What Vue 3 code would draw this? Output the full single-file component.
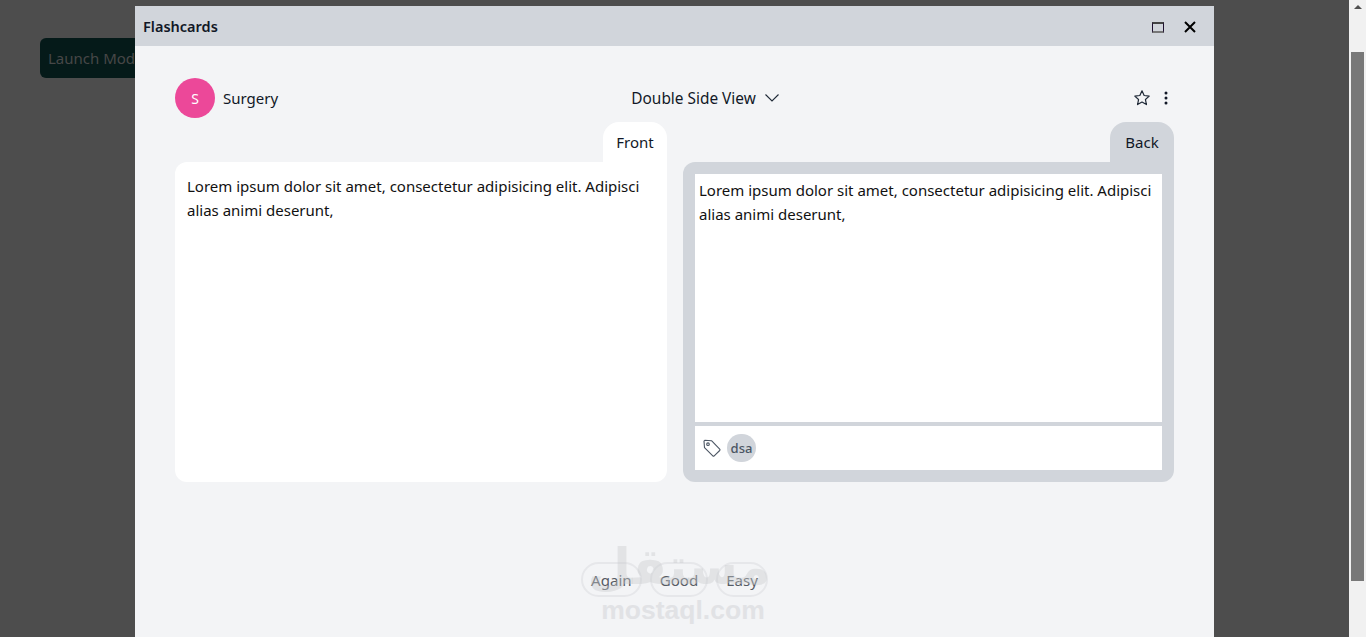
<script setup>
const grades = ['Again', 'Good', 'Easy']
const lorem = 'Lorem ipsum dolor sit amet, consectetur adipisicing elit. Adipisci alias animi deserunt,'
</script>

<template>
  <div class="page">
    <div class="viewport">
      <button class="launch">Launch Modal</button>
      <div class="overlay">
        <section class="modal">
          <header class="modal-head">
            <h1 class="modal-title">Flashcards</h1>
            <div class="win-actions">
              <span class="maximize"></span>
              <svg class="close" width="16" height="16" viewBox="0 0 16 16" fill="none" stroke="#000" stroke-width="2">
                <path d="M3 3l10 10M13 3L3 13" />
              </svg>
            </div>
          </header>
          <div class="modal-body">
            <div class="toolbar">
              <div class="deck">
                <span class="avatar">S</span>
                <span>Surgery</span>
              </div>
              <div class="view">
                <span>Double Side View</span>
                <svg width="16" height="16" viewBox="0 0 16 16" fill="none" stroke="#1f2937" stroke-width="1.100">
                  <path d="M1.500 4.500L8 11l6.500-6.500" />
                </svg>
              </div>
              <div class="tools">
                <svg width="18" height="18" viewBox="0 0 18 18" fill="none" stroke="#1f2937" stroke-width="1.200" stroke-linejoin="round">
                  <path d="M9 1.800l2.150 4.700 5.050.6-3.750 3.450 1 5.050L9 13.100l-4.450 2.500 1-5.050L1.800 7.100l5.050-.6z" />
                </svg>
                <svg width="16" height="16" viewBox="0 0 16 16" fill="#111827">
                  <circle cx="8" cy="3" r="1.500" />
                  <circle cx="8" cy="8" r="1.500" />
                  <circle cx="8" cy="13" r="1.500" />
                </svg>
              </div>
            </div>
            <div class="cards">
              <div class="side">
                <div class="tab front-tab">Front</div>
                <div class="card front-card">
                  <p class="card-text">{{ lorem }}</p>
                </div>
              </div>
              <div class="side">
                <div class="tab back-tab">Back</div>
                <div class="card back-card">
                  <p class="card-text back-text">{{ lorem }}</p>
                  <div class="tags">
                    <svg width="20" height="20" viewBox="0 0 20 20" fill="none" stroke="#4b5563" stroke-width="1.100" stroke-linejoin="round">
                      <path d="M2 3.200L2.800 2.300l6.700.4 8.200 8.400a1 1 0 0 1 0 1.400l-5.500 5.300a1 1 0 0 1-1.400 0L2.500 9.700z" />
                      <circle cx="6" cy="6.200" r="1.300" />
                    </svg>
                    <span class="tag">dsa</span>
                  </div>
                </div>
              </div>
            </div>
            <div class="grades">
              <button v-for="g in grades" :key="g" class="grade">{{ g }}</button>
            </div>
          </div>
        </section>
      </div>
      <div class="watermark" aria-hidden="true">
        <div class="wm-ar">مستقل</div>
        <div class="wm-en">mostaql.com</div>
      </div>
    </div>
    <div class="scrollbar">
      <span class="arrow"></span>
      <span class="thumb"></span>
    </div>
  </div>
</template>

<style>
html, body { margin: 0; overflow: hidden; }
</style>

<style scoped>
.page {
  display: flex;
  height: 637px;
  overflow: hidden;
  font-family: "Noto Sans", "Open Sans", sans-serif;
  font-size: 16px;
  color: #111827;
}
.viewport {
  position: relative;
  flex: 1;
  background: #4d4d4d;
  padding: 38px 40px;
}
.launch {
  display: block;
  height: 40px;
  width: 140px;
  padding: 0 8px;
  text-align: left;
  border: 0;
  border-radius: 6px;
  background: #051a19;
  color: #474747;
  font: inherit;
  font-size: 15px;
  white-space: nowrap;
}
.overlay {
  position: absolute;
  inset: 0;
  display: flex;
  justify-content: center;
  padding-top: 6px;
}
.modal {
  width: 1079px;
  height: 700px;
  background: #f3f4f6;
}
.modal-head {
  display: flex;
  align-items: center;
  justify-content: space-between;
  height: 40px;
  padding: 0 16px 0 8px;
  background: #d1d5db;
}
.modal-title {
  margin: 0;
  font-size: 14.500px;
  font-weight: 600;
}
.win-actions {
  display: flex;
  align-items: center;
  gap: 18px;
}
.maximize {
  box-sizing: border-box;
  width: 12px;
  height: 11px;
  border: 1px solid #1f1030;
  border-top: 2px solid #444;
  border-bottom: 2px solid #777;
  margin-top: 2px;
}
.close { margin-top: 2px; }
.modal-body { padding: 32px 40px; }
.toolbar {
  display: flex;
  align-items: center;
  justify-content: space-between;
  height: 40px;
  margin-bottom: 4px;
}
.deck {
  display: flex;
  align-items: center;
  gap: 8px;
  font-size: 15px;
}
.avatar {
  display: flex;
  align-items: center;
  justify-content: center;
  width: 40px;
  height: 40px;
  border-radius: 50%;
  background: #ec4899;
  color: #fff;
  font-size: 14px;
}
.view {
  display: flex;
  align-items: center;
  gap: 8px;
  font-size: 15.400px;
}
.tools {
  display: flex;
  align-items: center;
  gap: 7px;
}
.cards {
  display: grid;
  grid-template-columns: 492px 491px;
  gap: 16px;
}
.side {
  display: flex;
  flex-direction: column;
  align-items: flex-end;
}
.tab {
  width: 64px;
  height: 40px;
  display: flex;
  align-items: center;
  justify-content: center;
  border-radius: 16px 16px 0 0;
  font-size: 15px;
}
.front-tab { background: #fff; }
.back-tab { background: #d1d5db; }
.card {
  box-sizing: border-box;
  width: 100%;
  height: 320px;
  border-radius: 12px;
}
.front-card {
  background: #fff;
  border-top-right-radius: 0;
}
.back-card {
  display: flex;
  flex-direction: column;
  background: #d1d5db;
  padding: 12px;
  border-top-right-radius: 0;
}
.card-text {
  margin: 0;
  padding: 12px;
  font-size: 15px;
  line-height: 24px;
  color: #111;
}
.back-text {
  flex: 1;
  padding: 4px;
  background: #fff;
}
.tags {
  display: flex;
  align-items: center;
  gap: 5px;
  height: 44px;
  padding: 0 7px;
  margin-top: 4px;
  background: #fff;
}
.tag {
  display: flex;
  align-items: center;
  justify-content: center;
  width: 29px;
  height: 28px;
  border-radius: 14px;
  background: #d1d5db;
  color: #4b5563;
  font-size: 13px;
  font-weight: 500;
}
.grades {
  display: flex;
  justify-content: center;
  gap: 8px;
  margin-top: 80px;
}
.grade {
  box-sizing: border-box;
  height: 35px;
  padding: 0 8px;
  border: 2px solid #e6e7ea;
  border-radius: 18px;
  background: none;
  color: #565b63;
  font: inherit;
  font-size: 15.100px;
  line-height: 24px;
}
.watermark {
  position: absolute;
  left: 578px;
  top: 540px;
  width: 210px;
  height: 90px;
  pointer-events: none;
  text-align: center;
}
.wm-ar {
  position: absolute;
  left: -8px;
  right: 0;
  top: -8px;
  font-family: "DejaVu Sans", sans-serif;
  font-size: 50px;
  font-weight: 700;
  line-height: 70px;
  color: rgba(200, 202, 206, .4);
}
.wm-en {
  position: absolute;
  left: 0;
  right: 0;
  top: 52px;
  font-family: "Liberation Sans", sans-serif;
  font-size: 26.500px;
  font-weight: 700;
  line-height: 36px;
  color: #e1e2e5;
}
.scrollbar {
  position: relative;
  width: 17px;
  background: #f1f1f1;
}
.arrow {
  position: absolute;
  left: 5px;
  top: 5px;
  border-left: 4px solid transparent;
  border-right: 4px solid transparent;
  border-bottom: 4px solid #505050;
}
.thumb {
  position: absolute;
  left: 2px;
  right: 2px;
  top: 52px;
  bottom: 56px;
  background: #787878;
}
</style>
